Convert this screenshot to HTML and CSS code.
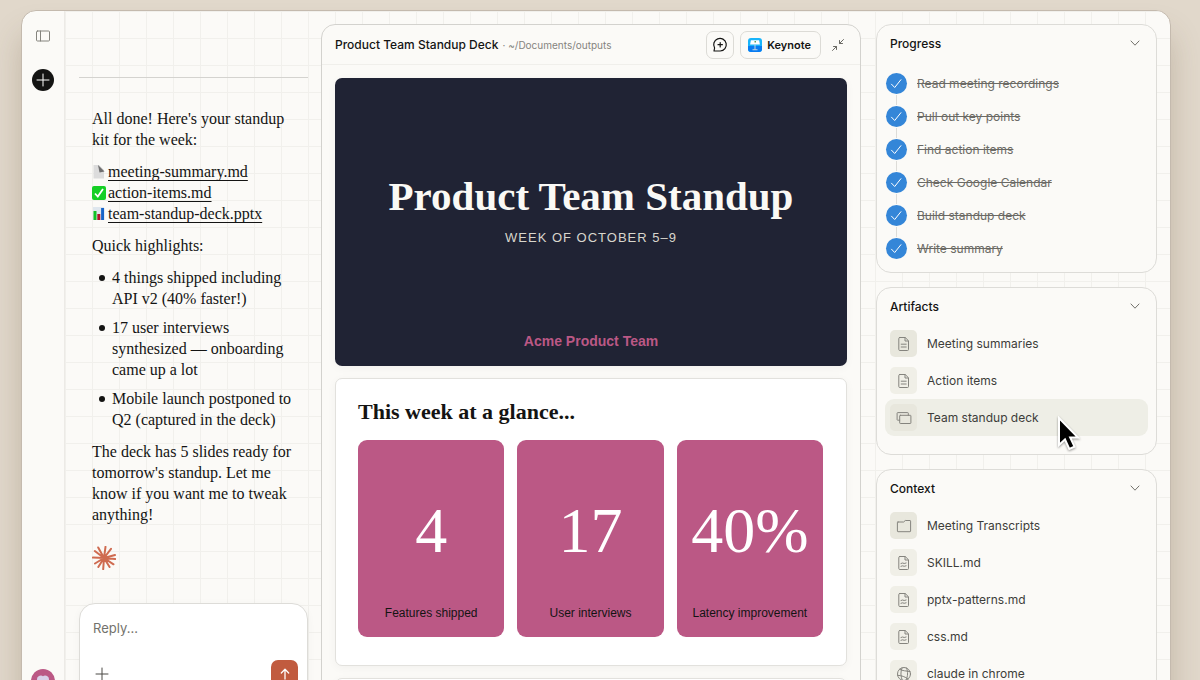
FILE: index.html
```html
<!DOCTYPE html>
<html lang="en">

<head>
  <meta charset="UTF-8">
  <meta name="viewport" content="width=device-width, initial-scale=1.0">
  <title>Product Team Standup Deck</title>
  <link rel="stylesheet" href="styles.css">
</head>

<body>
  <!-- Shared icons -->
  <svg class="sprite" aria-hidden="true">
    <symbol id="chevron" viewBox="0 0 12 12">
      <path d="M2 4l4 4.200L10 4" />
    </symbol>
    <symbol id="check" viewBox="0 0 21 21">
      <path d="M5.500 11.200l3.200 3.300 6.200-7.800" />
    </symbol>
    <symbol id="doc" viewBox="0 0 16 16">
      <path d="M3.800 1.500h5.400l3.300 3.300v8.700a1 1 0 0 1-1 1H3.800a1 1 0 0 1-1-1v-11a1 1 0 0 1 1-1zM9 1.700V5h3.300M5.200 8.200h5M5.200 11h5" />
    </symbol>
    <symbol id="md" viewBox="0 0 16 16">
      <path d="M3.800 1.500h5.400l3.300 3.300v8.700a1 1 0 0 1-1 1H3.800a1 1 0 0 1-1-1v-11a1 1 0 0 1 1-1zM9 1.700V5h3.300M5 8.500l1.600-.5 1.600.5 1.900-.5M5 11.300l1.600-.5 1.600.5 1.900-.5" />
    </symbol>
    <symbol id="slides" viewBox="0 0 16 16">
      <path d="M3.700 10.200H1.700a.6.6 0 0 1-.6-.6V3.200a.6.6 0 0 1 .6-.6h10a.6.6 0 0 1 .6.6v2M4.300 5.300h10a.6.6 0 0 1 .6.6v7a.6.6 0 0 1-.6.6h-10a.6.6 0 0 1-.6-.6v-7a.6.6 0 0 1 .6-.6z" />
    </symbol>
    <symbol id="folder" viewBox="0 0 16 16">
      <path d="M2 4h5.600l1.700-1.500H14a.6.6 0 0 1 .6.6v10a.6.6 0 0 1-.6.6H2a.6.6 0 0 1-.6-.6V4.600A.6.6 0 0 1 2 4z" />
    </symbol>
    <symbol id="globe" viewBox="0 0 16 16">
      <circle cx="8" cy="8" r="6.500" />
      <path d="M3.600 3.300C6.500 5 10 4.800 14 5.600M1.600 9.300c4 .2 7.400 1.400 10.600 3.800M6 1.900C4.400 6 4.600 10 6.200 14.200M10.500 2c1.700 4 1.400 8-.5 12.200" />
    </symbol>
    <symbol id="plus" viewBox="0 0 14 14">
      <path d="M7 1v12M1 7h12" />
    </symbol>
  </svg>

  <div class="window">
    <nav class="rail">
      <button class="rail-button" aria-label="Toggle sidebar">
        <svg class="icon" width="16" height="14" viewBox="0 0 16 14">
          <rect x="1.500" y="2" width="13" height="10" rx="1" />
          <path d="M5.500 2v10" />
        </svg>
      </button>
      <button class="new-button" aria-label="New task">
        <svg class="icon" width="14" height="14"><use href="#plus" /></svg>
      </button>
      <button class="avatar" aria-label="Account">
        <svg width="14" height="14" viewBox="0 0 14 14">
          <path d="M7 13C3 11 1 8.500 1 5.200 1 2 5 .8 7 2.200 9 .8 13 2 13 5.200 13 8.500 11 11 7 13z" fill="#d9cfe8" />
        </svg>
      </button>
    </nav>

    <div class="workspace">
      <!-- Chat -->
      <main class="chat">
        <div class="message">
          <p>All done! Here's your standup kit for the week:</p>
          <ul class="files">
            <li>
              <svg width="14" height="14" viewBox="0 0 14 14">
                <path d="M1.500 0H7l5 5v8.500H1.500z" fill="#dcdcdc" />
                <path d="M6 0l6.500 6.500-5 1z" fill="#6f6f6f" />
              </svg>
              <a href="#meeting-summary">meeting-summary.md</a>
            </li>
            <li>
              <svg width="14" height="14" viewBox="0 0 14 14">
                <rect width="14" height="14" rx="2" fill="#15cf25" />
                <path d="M3 7.500l2.800 3L11 3" fill="none" stroke="#fff" stroke-width="1.800" />
              </svg>
              <a href="#action-items">action-items.md</a>
            </li>
            <li>
              <svg width="14" height="14" viewBox="0 0 14 14">
                <path d="M1 0h11v13H1z" fill="#dfe7ee" />
                <path d="M1.500 4h3v9h-3z" fill="#12c326" />
                <path d="M5.300 7h3v6h-3z" fill="#b3122d" />
                <path d="M9.100 1h3v12h-3z" fill="#1764c8" />
              </svg>
              <a href="#team-standup-deck">team-standup-deck.pptx</a>
            </li>
          </ul>
          <p>Quick highlights:</p>
          <ul class="highlights">
            <li>4 things shipped including API v2 (40% faster!)</li>
            <li>17 user interviews synthesized — onboarding came up a lot</li>
            <li>Mobile launch postponed to Q2 (captured in the deck)</li>
          </ul>
          <p>The deck has 5 slides ready for tomorrow's standup. Let me know if you want me to tweak anything!</p>
        </div>

        <svg class="spark" width="24" height="24" viewBox="0 0 24 24">
          <path d="M12 12L6.200 1.500M12 12L13.500.8M12 12l7-9.200M12 12L2.800 5M12 12l11-3M12 12L.8 11.600M12 12l11.200 1M12 12l-9 5.500M12 12l9.500 6.300M12 12L6.300 21M12 12l-.8 11.200M12 12l5.600 9" />
        </svg>

        <form class="composer">
          <textarea aria-label="Reply" placeholder="Reply..." rows="1"></textarea>
          <div class="composer-bar">
            <button class="attach" type="button" aria-label="Add attachment">
              <svg class="icon" width="14" height="14"><use href="#plus" /></svg>
            </button>
            <button class="send" type="submit" aria-label="Send">
              <svg class="icon" width="14" height="14" viewBox="0 0 14 14">
                <path d="M7 12V2.500M3.300 6L7 2.300 10.700 6" stroke-width="1.300" />
              </svg>
            </button>
          </div>
        </form>
      </main>

      <!-- Deck preview -->
      <section class="deck">
        <header class="deck-header">
          <h1>Product Team Standup Deck</h1>
          <span class="path">· ~/Documents/outputs</span>
          <button class="tool comment" aria-label="Add comment">
            <svg class="icon" width="16" height="16" viewBox="0 0 16 16">
              <path d="M2 14l.6-3A6.300 6.300 0 1 1 8.200 14zM8.200 5.500v4.400M6 7.700h4.400" stroke-width="1.200" />
            </svg>
          </button>
          <button class="tool">
            <svg width="14" height="14" viewBox="0 0 14 14">
              <rect width="14" height="14" rx="3" fill="#18b4fa" />
              <path d="M0 8h14v3a3 3 0 0 1-3 3H3a3 3 0 0 1-3-3z" fill="#087cf2" />
              <path d="M2.900 2.300h8.200l.8 4.200H2.100z" fill="#fff" />
              <path d="M6.500 6.500h1v5h-1zM4.500 11.300h5v1h-5z" fill="#c3d3df" />
              <path d="M6.500 3h1.500v1.500H6.500z" fill="#5da05a" />
            </svg>
            Keynote
          </button>
          <button class="collapse" aria-label="Collapse preview">
            <svg class="icon" width="14" height="14" viewBox="0 0 14 14">
              <path d="M12.500 1.500L8.500 5.500M8.500 2.500v3h3M1.500 12.500l4-4M2.500 8.500h3v3" />
            </svg>
          </button>
        </header>

        <div class="slides">
          <article class="slide cover">
            <h2>Product Team Standup</h2>
            <p class="week">WEEK OF OCTOBER 5–9</p>
            <p class="team">Acme Product Team</p>
          </article>
          <article class="slide glance">
            <h2>This week at a glance...</h2>
            <div class="stats">
              <div class="stat">
                <strong>4</strong>
                <span>Features shipped</span>
              </div>
              <div class="stat">
                <strong>17</strong>
                <span>User interviews</span>
              </div>
              <div class="stat">
                <strong>40%</strong>
                <span>Latency improvement</span>
              </div>
            </div>
          </article>
          <article class="slide"></article>
        </div>
      </section>

      <!-- Side panels -->
      <aside class="panels">
        <section class="panel">
          <button class="panel-header">Progress
            <svg class="icon" width="12" height="12"><use href="#chevron" /></svg>
          </button>
          <ol class="steps">
            <li><svg class="tick" width="21" height="21"><use href="#check" /></svg><s>Read meeting recordings</s></li>
            <li><svg class="tick" width="21" height="21"><use href="#check" /></svg><s>Pull out key points</s></li>
            <li><svg class="tick" width="21" height="21"><use href="#check" /></svg><s>Find action items</s></li>
            <li><svg class="tick" width="21" height="21"><use href="#check" /></svg><s>Check Google Calendar</s></li>
            <li><svg class="tick" width="21" height="21"><use href="#check" /></svg><s>Build standup deck</s></li>
            <li><svg class="tick" width="21" height="21"><use href="#check" /></svg><s>Write summary</s></li>
          </ol>
        </section>

        <section class="panel">
          <button class="panel-header">Artifacts
            <svg class="icon" width="12" height="12"><use href="#chevron" /></svg>
          </button>
          <div class="rows">
            <button class="row"><span class="tile strong"><svg class="icon" width="16" height="16"><use href="#doc" /></svg></span>Meeting summaries</button>
            <button class="row"><span class="tile"><svg class="icon" width="16" height="16"><use href="#doc" /></svg></span>Action items</button>
            <button class="row active"><span class="tile strong"><svg class="icon" width="16" height="16"><use href="#slides" /></svg></span>Team standup deck
              <svg class="pointer" width="24" height="36" viewBox="0 0 24 36">
                <path d="M2 2v27l6-5.500 4.300 9.500 5.200-2.300-4.300-9.200H21z" />
              </svg>
            </button>
          </div>
        </section>

        <section class="panel">
          <button class="panel-header">Context
            <svg class="icon" width="12" height="12"><use href="#chevron" /></svg>
          </button>
          <div class="rows">
            <button class="row"><span class="tile strong"><svg class="icon" width="16" height="16"><use href="#folder" /></svg></span>Meeting Transcripts</button>
            <button class="row"><span class="tile"><svg class="icon" width="16" height="16"><use href="#md" /></svg></span>SKILL.md</button>
            <button class="row"><span class="tile"><svg class="icon" width="16" height="16"><use href="#md" /></svg></span>pptx-patterns.md</button>
            <button class="row"><span class="tile"><svg class="icon" width="16" height="16"><use href="#md" /></svg></span>css.md</button>
            <button class="row"><span class="tile"><svg class="icon" width="16" height="16"><use href="#globe" /></svg></span>claude in chrome</button>
          </div>
        </section>
      </aside>
    </div>
  </div>
</body>

</html>
```
FILE: styles.css
```css
* {
  box-sizing: border-box;
}

body {
  margin: 0;
  height: 100vh;
  overflow: hidden;
  padding: 10px 29px 0 21px;
  background: #e1d8cb;
  font-family: Inter, "Liberation Sans", sans-serif;
  font-size: 12px;
  color: #141413;
}

h1,
h2,
p,
ul,
ol {
  margin: 0;
  padding: 0;
}

ul,
ol {
  list-style: none;
}

button {
  border: none;
  background: none;
  padding: 0;
  font: inherit;
  color: inherit;
  cursor: pointer;
}

svg {
  display: block;
  flex-shrink: 0;
}

.sprite {
  position: absolute;
  width: 0;
  height: 0;
}

.icon {
  fill: none;
  stroke: currentColor;
  stroke-width: 1;
  stroke-linecap: round;
  stroke-linejoin: round;
}

.window {
  display: flex;
  height: calc(100vh + 10px);
  overflow: hidden;
  border: 1px solid #c4baae;
  border-radius: 15px;
  background: #fbfaf7;
  box-shadow: 0 24px 30px rgba(100, 80, 50, 0.25);
}

/* Left rail */
.rail {
  display: flex;
  flex-direction: column;
  align-items: center;
  width: 42px;
  padding: 18px 0 6px;
}

.rail-button {
  color: #85847e;
}

.new-button {
  display: grid;
  place-items: center;
  width: 22px;
  height: 22px;
  margin-top: 26px;
  border-radius: 50%;
  background: #141413;
  color: #fff;
}

.avatar {
  display: grid;
  place-items: center;
  width: 24px;
  height: 24px;
  margin-top: auto;
  border-radius: 50%;
  background: #bb5885;
}

.workspace {
  display: grid;
  flex: 1;
  grid-template-columns: minmax(0, 256fr) minmax(0, 540fr) minmax(0, 296fr);
  min-width: 0;
  padding-right: 13px;
  border-left: 1px solid #eceae6;
  background-image:
    linear-gradient(to right, #f1f0ec 1px, transparent 1px),
    linear-gradient(to bottom, #f1f0ec 1px, transparent 1px);
  background-size: 27px 27px;
}

/* Chat */
.chat {
  padding: 66px 13px 0 14px;
}

.message {
  display: flex;
  flex-direction: column;
  gap: 11px;
  padding: 30px 13px 0;
  border-top: 1px solid #d4d3cf;
  font-family: "Liberation Serif", serif;
  font-size: 16px;
  line-height: 21px;
}

.files li {
  display: flex;
  align-items: center;
  gap: 2px;
}

.files a {
  color: inherit;
  text-underline-offset: 3px;
  text-decoration-thickness: 1px;
}

.highlights {
  display: flex;
  flex-direction: column;
  gap: 8px;
  padding-left: 7px;
}

.highlights li {
  display: flex;
  gap: 7px;
}

.highlights li::before {
  content: "";
  flex-shrink: 0;
  width: 6px;
  height: 6px;
  margin-top: 8px;
  border-radius: 50%;
  background: #141413;
}

.spark {
  margin: 21px 13px 0;
  stroke: #cf6b50;
  stroke-width: 2;
  stroke-linecap: round;
}

.composer {
  margin-top: 33px;
  padding: 14px 9px 12px 13px;
  border: 1px solid #dddcd8;
  border-radius: 16px;
  background: #fff;
  box-shadow: 0 2px 8px rgba(0, 0, 0, 0.04);
}

.composer textarea {
  display: block;
  width: 100%;
  height: 20px;
  padding: 0;
  border: none;
  outline: none;
  resize: none;
  background: none;
  font-family: inherit;
  font-size: 13px;
  line-height: 20px;
}

.composer textarea::placeholder {
  color: #73726c;
}

.composer-bar {
  display: flex;
  align-items: center;
  justify-content: space-between;
  margin-top: 22px;
}

.attach {
  padding: 2px;
  color: #4a4945;
}

.send {
  display: grid;
  place-items: center;
  width: 27px;
  height: 27px;
  border-radius: 7px;
  background: #c15b3f;
  color: #fff;
}

/* Deck preview */
.deck {
  margin-top: 13px;
  border: 1px solid #d3d2ce;
  border-radius: 14px;
  background: #fbfaf7;
}

.deck-header {
  display: flex;
  align-items: center;
  height: 40px;
  padding: 0 15px 0 13px;
  border-bottom: 1px solid #f0efeb;
}

.deck-header h1 {
  font-size: 12px;
  font-weight: 500;
}

.path {
  flex: 1;
  margin-left: 4px;
  font-size: 10px;
  color: #85847e;
}

.tool {
  display: flex;
  align-items: center;
  gap: 5px;
  height: 28px;
  margin-left: 6px;
  padding: 0 9px 0 7px;
  border: 1px solid #dcdbd6;
  border-radius: 7px;
  font-size: 11px;
  font-weight: 600;
}

.comment {
  padding: 0 5px;
}

.collapse {
  margin-left: 10px;
  color: #6b6a65;
}

.slides {
  display: flex;
  flex-direction: column;
  gap: 12px;
  padding: 13px;
}

.slide {
  display: flex;
  flex-direction: column;
  aspect-ratio: 16 / 9;
  border: 1px solid #e2e1dd;
  border-radius: 7px;
  background: #fff;
  box-shadow: 0 2px 10px rgba(0, 0, 0, 0.04);
}

.cover {
  align-items: center;
  padding: 92px 0 16px;
  border: none;
  background: #202334;
  color: #faf9f5;
}

.cover h2 {
  font-family: "Liberation Serif", serif;
  font-size: 41px;
  line-height: 52px;
}

.week {
  margin-top: 8px;
  font-family: "Liberation Sans", sans-serif;
  font-size: 13px;
  line-height: 16px;
  letter-spacing: 1px;
  color: #d8d6cd;
}

.team {
  margin-top: auto;
  font-family: "Liberation Sans", sans-serif;
  font-size: 14px;
  font-weight: bold;
  line-height: 18px;
  color: #bb5885;
}

.glance {
  padding: 19px 23px 28px 22px;
}

.glance h2 {
  font-family: "Liberation Serif", serif;
  font-size: 22px;
  line-height: 28px;
}

.stats {
  display: grid;
  flex: 1;
  grid-template-columns: repeat(3, 1fr);
  gap: 13px;
  margin-top: 14px;
}

.stat {
  display: flex;
  flex-direction: column;
  align-items: center;
  justify-content: flex-end;
  padding-bottom: 16px;
  border-radius: 9px;
  background: #bb5885;
  font-family: "Liberation Sans", sans-serif;
  line-height: 16px;
}

.stat strong {
  margin-bottom: 42px;
  font-family: "Liberation Serif", serif;
  font-size: 64px;
  font-weight: normal;
  line-height: 64px;
  color: #fff;
}

/* Side panels */
.panels {
  display: flex;
  flex-direction: column;
  gap: 14px;
  padding: 13px 0 0 15px;
}

.panel {
  flex-shrink: 0;
  padding-bottom: 7px;
  border: 1px solid #dddcd8;
  border-radius: 15px;
  background: #fbfaf7;
}

.panel-header {
  display: flex;
  align-items: center;
  justify-content: space-between;
  width: 100%;
  height: 36px;
  padding: 0 15px 0 13px;
  font-weight: 500;
}

.panel-header .icon {
  color: #73726c;
}

.steps {
  padding: 6px 9px 0;
}

.steps li {
  position: relative;
  display: flex;
  align-items: center;
  gap: 10px;
  height: 33px;
  color: #6b6a65;
}

.steps li + li::before {
  content: "";
  position: absolute;
  top: -5px;
  left: 10px;
  width: 1px;
  height: 10px;
  background: #dddcd8;
}

.tick {
  border-radius: 50%;
  background: #3486d8;
  fill: none;
  stroke: #fff;
  stroke-linecap: round;
  stroke-linejoin: round;
}

.rows {
  padding: 1px 8px 11px;
}

.row {
  position: relative;
  display: flex;
  align-items: center;
  gap: 10px;
  width: 100%;
  height: 37px;
  padding: 0 5px;
  border-radius: 9px;
  color: #3d3d3a;
}

.row.active {
  background: #eeeee6;
}

.tile {
  display: grid;
  place-items: center;
  width: 27px;
  height: 27px;
  border-radius: 5px;
  background: #f0efe7;
  color: #85847e;
}

.tile.strong {
  background: #e8e7dd;
}

.pointer {
  position: absolute;
  top: 17px;
  right: 67px;
  fill: #000;
  stroke: #fff;
  stroke-width: 2;
  filter: drop-shadow(0 1px 1px rgba(0, 0, 0, 0.4));
}
```
